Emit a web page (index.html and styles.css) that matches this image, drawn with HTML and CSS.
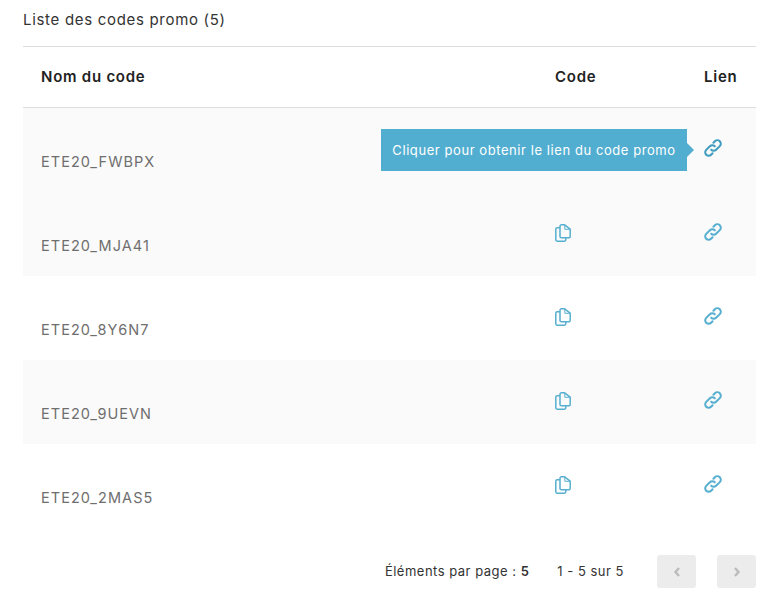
FILE: index.html
```html
<!DOCTYPE html>
<html lang="fr">
<head>
<meta charset="utf-8">
<title>Liste des codes promo</title>
<link rel="stylesheet" href="styles.css">
</head>
<body>
<svg class="defs" width="0" height="0" aria-hidden="true">
  <symbol id="copy" viewBox="0 0 16 18">
    <path d="M9.6.8H6.4A1.4 1.4 0 0 0 5 2.200v10.200a1.400 1.400 0 0 0 1.400 1.400h7.400a1.400 1.400 0 0 0 1.400-1.400V5.200z" fill="none" stroke="currentColor" stroke-width="1.500" stroke-linejoin="round"/>
    <path d="M9.800 1v4.300h5" fill="none" stroke="currentColor" stroke-width="1"/>
    <path d="M5 3.800H2.200A1.400 1.400 0 0 0 .8 5.200v10.600a1.400 1.400 0 0 0 1.400 1.400h7.200a1.400 1.400 0 0 0 1.400-1.400v-2" fill="none" stroke="currentColor" stroke-width="1.500"/>
  </symbol>
  <symbol id="link" viewBox="0 0 18 18">
    <path d="M7.200 10.800a3.400 3.400 0 0 0 4.900 0l3.700-3.700a3.400 3.400 0 0 0-4.900-4.900L9.400 3.700" fill="none" stroke="currentColor" stroke-width="2" stroke-linecap="round"/>
    <path d="M10.800 7.200a3.400 3.400 0 0 0-4.900 0l-3.700 3.700a3.400 3.400 0 0 0 4.900 4.900l1.500-1.500" fill="none" stroke="currentColor" stroke-width="2" stroke-linecap="round"/>
  </symbol>
</svg>
<main class="page">
  <h1 class="title">Liste des codes promo (5)</h1>
  <div class="table">
    <div class="row head">
      <div class="name">Nom du code</div>
      <div class="code">Code</div>
      <div class="lien">Lien</div>
    </div>
    <div class="row body shaded">
      <div class="name">ETE20_FWBPX</div>
      <div class="code"></div>
      <div class="lien">
        <div class="tooltip">Cliquer pour obtenir le lien du code promo</div>
        <svg class="icon link-dark"><use href="#link"/></svg>
      </div>
    </div>
    <div class="row body shaded">
      <div class="name">ETE20_MJA41</div>
      <div class="code"><svg class="icon"><use href="#copy"/></svg></div>
      <div class="lien"><svg class="icon"><use href="#link"/></svg></div>
    </div>
    <div class="row body">
      <div class="name">ETE20_8Y6N7</div>
      <div class="code"><svg class="icon"><use href="#copy"/></svg></div>
      <div class="lien"><svg class="icon"><use href="#link"/></svg></div>
    </div>
    <div class="row body shaded">
      <div class="name">ETE20_9UEVN</div>
      <div class="code"><svg class="icon"><use href="#copy"/></svg></div>
      <div class="lien"><svg class="icon"><use href="#link"/></svg></div>
    </div>
    <div class="row body">
      <div class="name">ETE20_2MAS5</div>
      <div class="code"><svg class="icon"><use href="#copy"/></svg></div>
      <div class="lien"><svg class="icon"><use href="#link"/></svg></div>
    </div>
  </div>
  <div class="pager">
    <span class="per-page">Éléments par page : <b>5</b></span>
    <span class="range">1 - 5 sur 5</span>
    <button class="nav" aria-label="Précédent"><svg viewBox="0 0 8 12" class="chev"><path d="M6 2 2.500 6 6 10" fill="none" stroke="currentColor" stroke-width="2.400"/></svg></button>
    <button class="nav" aria-label="Suivant"><svg viewBox="0 0 8 12" class="chev"><path d="M2 2l3.500 4L2 10" fill="none" stroke="currentColor" stroke-width="2.400"/></svg></button>
  </div>
</main>
</body>
</html>
```
FILE: styles.css
```css
* { box-sizing: border-box; }
html, body { margin: 0; background: #fff; }
body { font-family: Inter, "Noto Sans", sans-serif; color: #2b2b2b; }
.defs { position: absolute; }
.page { padding: 0 26px 0 23px; width: 782px; }
.title { margin: 0; height: 46px; padding-top: 11px; font-size: 15px; line-height: 18px; font-weight: 400; color: #333; letter-spacing: .69px; }
.table { border-top: 1px solid #ddd; }
.row { display: grid; grid-template-columns: 514px 149px 52px; padding-left: 18px; }
.head { height: 61px; padding-bottom: 2px; align-items: center; border-bottom: 1px solid #ddd; font-size: 15px; font-weight: 600; color: #222; letter-spacing: .75px; }
.body { height: 84px; font-size: 14.5px; color: #6e6e6e; letter-spacing: 1.05px; }
.shaded { background: #fafafa; }
.body .name { padding-top: 45px; line-height: 18px; }
.body .code, .body .lien { position: relative; padding-top: 31px; }
.icon { display: block; width: 16px; height: 18px; color: #57afd0; }
.code .icon { margin-top: 1px; }
.lien .icon { width: 18px; }
.link-dark { color: #3f9cbf; }
.tooltip { position: absolute; right: 69px; top: 21px; height: 42px; width: 306px; display: flex; align-items: center; justify-content: center; background: #52aed0; color: #fff; font-size: 13px; letter-spacing: .57px; white-space: nowrap; }
.tooltip::after { content: ""; position: absolute; right: -7px; top: 14px; border-left: 7px solid #52aed0; border-top: 7px solid transparent; border-bottom: 7px solid transparent; }
.pager { display: flex; align-items: center; justify-content: flex-end; height: 33px; margin-top: 27px; font-size: 13px; color: #333; letter-spacing: .5px; }
.per-page, .range { padding-bottom: 2px; }
.per-page b { font-weight: 600; }
.range { margin-left: 28px; margin-right: 33px; }
.nav { width: 39px; height: 33px; padding: 0; border: 0; border-radius: 3px; background: #ececec; color: #bbb; display: flex; align-items: center; justify-content: center; }
.nav + .nav { margin-left: 21px; }
.chev { width: 8px; height: 12px; }
```
